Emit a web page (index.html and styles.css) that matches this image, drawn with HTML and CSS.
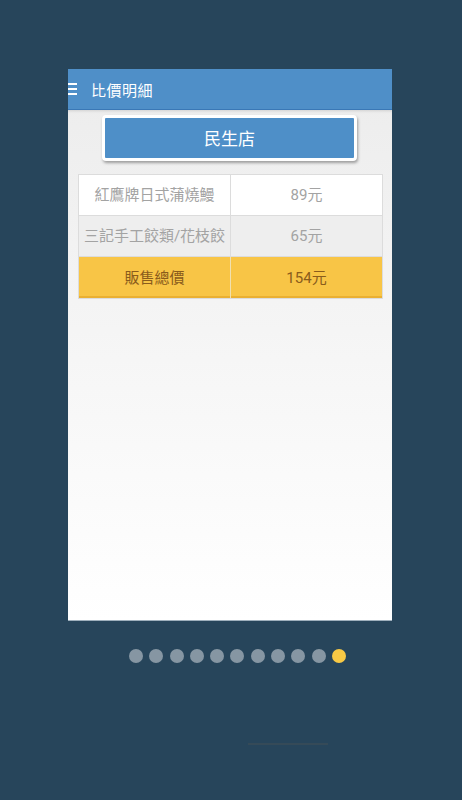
FILE: index.html
```html
<!DOCTYPE html>
<html>
<head>
<meta charset="utf-8">
<link rel="stylesheet" href="styles.css">
</head>
<body>
<div class="page">
  <div class="card">
    <div class="header">
      <div class="menu"><span></span><span></span><span></span></div>
      <div class="title">比價明細</div>
    </div>
    <div class="content">
      <div class="store-wrap"><div class="store">民生店</div></div>
      <div class="table">
        <div class="row">
          <div class="cell">紅鷹牌日式蒲燒鰻</div>
          <div class="cell">89元</div>
        </div>
        <div class="row alt">
          <div class="cell">三記手工餃類/花枝餃</div>
          <div class="cell">65元</div>
        </div>
        <div class="row total">
          <div class="cell">販售總價</div>
          <div class="cell">154元</div>
        </div>
      </div>
    </div>
  </div>
  <div class="dots">
    <span></span><span></span><span></span><span></span><span></span><span></span><span></span><span></span><span></span><span></span><span class="on"></span>
  </div>
  <div class="bar"></div>
</div>
</body>
</html>
```
FILE: styles.css
```css
html, body {
  margin: 0;
  padding: 0;
  background: #27455b;
}
body {
  font-family: Roboto, "Noto Sans CJK TC", sans-serif;
}
.page {
  width: 462px;
  height: 800px;
  padding-top: 69px;
  box-sizing: border-box;
}
.card {
  margin-left: 68px;
  width: 324px;
  height: 551px;
  display: flex;
  flex-direction: column;
  background: linear-gradient(#ececec, #ffffff);
  box-shadow: 0 1px 0 #9fb0bd;
}
.header {
  height: 41px;
  background: #4f8fc8;
  border-bottom: 1px solid #3a78b6;
  box-sizing: border-box;
  display: flex;
  align-items: center;
  overflow: hidden;
}
.menu {
  width: 10px;
  display: flex;
  flex-direction: column;
  gap: 3px;
  margin-right: 13px;
}
.menu span {
  display: block;
  width: 9px;
  height: 2px;
  background: #ffffff;
}
.title {
  color: #ffffff;
  font-size: 15px;
  letter-spacing: 0.5px;
}
.content {
  flex: 1;
  padding: 0 9px 0 10px;
  box-shadow: inset 0 3px 3px -2px rgba(0,0,0,0.12);
}
.store-wrap {
  display: flex;
  padding-top: 5px;
  padding-left: 24px;
}
.store {
  width: 249px;
  height: 39px;
  background: #4e8fc8;
  border: 3px solid #ffffff;
  border-radius: 4px;
  box-shadow: 1px 2px 3px rgba(0,0,0,0.35);
  color: #ffffff;
  font-size: 17px;
  display: flex;
  align-items: center;
  justify-content: center;
  padding-bottom: 1px;
  box-sizing: content-box;
}
.table {
  margin-top: 13px;
  width: 305px;
  display: flex;
  flex-direction: column;
  gap: 1px;
  background: #dcdcdc;
  border: 1px solid #dcdcdc;
  box-sizing: border-box;
}
.row {
  display: grid;
  grid-template-columns: 151px 1fr;
  gap: 1px;
  height: 40px;
}
.cell {
  display: flex;
  align-items: center;
  justify-content: center;
  background: #ffffff;
  color: #a3a3a3;
  font-size: 15px;
  padding-bottom: 3px;
  box-sizing: border-box;
}
.row.alt .cell {
  background: #eeeeee;
}
.row.total {
  height: 41px;
  background: #f0e0b0;
}
.row.total .cell {
  background: #f8c546;
  color: #8a5c1c;
  border-bottom: 2px solid #eab032;
  padding-bottom: 1px;
}
.dots {
  display: flex;
  gap: 6.3px;
  margin-top: 29px;
  padding-left: 129px;
}
.dots span {
  width: 14px;
  height: 14px;
  border-radius: 50%;
  background: #8696a3;
}
.dots span.on {
  background: #f8c945;
}
.bar {
  margin-top: 80px;
  margin-left: 248px;
  width: 80px;
  height: 2px;
  background: rgba(70,80,85,0.45);
}
```
